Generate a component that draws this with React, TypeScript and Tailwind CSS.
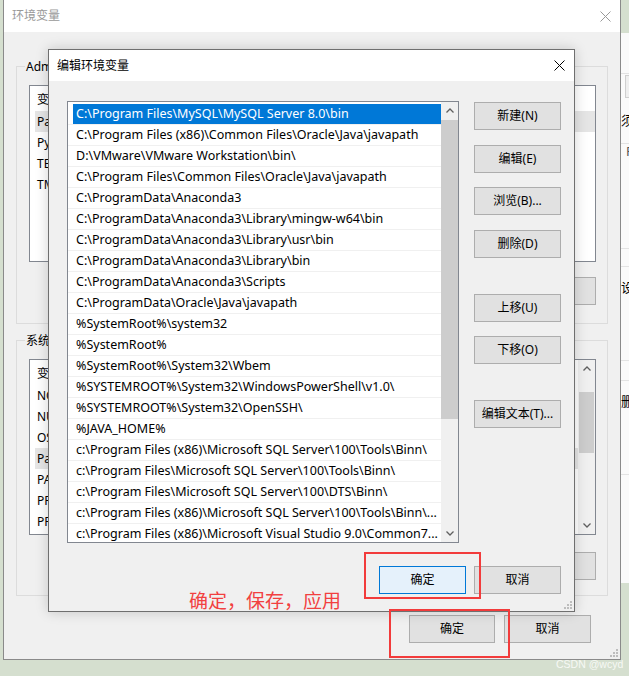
import clsx from "clsx";

const paths = [
  "C:\\Program Files\\MySQL\\MySQL Server 8.0\\bin",
  "C:\\Program Files (x86)\\Common Files\\Oracle\\Java\\javapath",
  "D:\\VMware\\VMware Workstation\\bin\\",
  "C:\\Program Files\\Common Files\\Oracle\\Java\\javapath",
  "C:\\ProgramData\\Anaconda3",
  "C:\\ProgramData\\Anaconda3\\Library\\mingw-w64\\bin",
  "C:\\ProgramData\\Anaconda3\\Library\\usr\\bin",
  "C:\\ProgramData\\Anaconda3\\Library\\bin",
  "C:\\ProgramData\\Anaconda3\\Scripts",
  "C:\\ProgramData\\Oracle\\Java\\javapath",
  "%SystemRoot%\\system32",
  "%SystemRoot%",
  "%SystemRoot%\\System32\\Wbem",
  "%SYSTEMROOT%\\System32\\WindowsPowerShell\\v1.0\\",
  "%SYSTEMROOT%\\System32\\OpenSSH\\",
  "%JAVA_HOME%",
  "c:\\Program Files (x86)\\Microsoft SQL Server\\100\\Tools\\Binn\\",
  "c:\\Program Files\\Microsoft SQL Server\\100\\Tools\\Binn\\",
  "c:\\Program Files\\Microsoft SQL Server\\100\\DTS\\Binn\\",
  "c:\\Program Files (x86)\\Microsoft SQL Server\\100\\Tools\\Binn\\...",
  "c:\\Program Files (x86)\\Microsoft Visual Studio 9.0\\Common7..."
];

const userVars = ["Path", "PyCharm Community Edition", "TEMP", "TMP"];
const sysVars = [
  "NODE_PATH",
  "NUMBER_OF_PROCESSORS",
  "OS",
  "Path",
  "PATHEXT",
  "PROCESSOR_ARCHITECTURE",
  "PROCESSOR_IDENTIFIER"
];

function CloseIcon({ color }: { color: string }) {
  return (
    <svg width="11" height="11" viewBox="0 0 11 11">
      <path d="M0.5 0.5L10.5 10.5M10.5 0.5L0.5 10.5" stroke={color} strokeWidth="1" />
    </svg>
  );
}

function Chevron({ up }: { up?: boolean }) {
  return (
    <svg width="8" height="5" viewBox="0 0 8 5">
      <path
        d={up ? "M0.5 4.5L4 1L7.5 4.5" : "M0.5 0.5L4 4L7.5 0.5"}
        stroke="#606060"
        strokeWidth="1.3"
        fill="none"
      />
    </svg>
  );
}

function Grip() {
  return (
    <svg width="10" height="10" viewBox="0 0 10 10">
      <rect x="8" y="2" width="2" height="2" fill="#bdbdbd" />
      <rect x="5" y="5" width="2" height="2" fill="#bdbdbd" />
      <rect x="8" y="5" width="2" height="2" fill="#bdbdbd" />
      <rect x="2" y="8" width="2" height="2" fill="#bdbdbd" />
      <rect x="5" y="8" width="2" height="2" fill="#bdbdbd" />
      <rect x="8" y="8" width="2" height="2" fill="#bdbdbd" />
    </svg>
  );
}

function Scrollbar({ gap, thumb }: { gap: number; thumb: number }) {
  return (
    <div className="flex w-[17px] flex-col bg-[#f0f0f0]">
      <div className="flex h-[17px] items-center justify-center">
        <Chevron up />
      </div>
      <div className="mx-[1px] bg-[#cdcdcd]" style={{ marginTop: gap, height: thumb }} />
      <div className="flex-1" />
      <div className="flex h-[17px] items-center justify-center">
        <Chevron />
      </div>
    </div>
  );
}

function WinButton({ label, focused, className }: { label: string; focused?: boolean; className?: string }) {
  return (
    <div
      className={clsx(
        "flex h-[28px] items-center justify-center border text-[12px] text-black",
        focused ? "border-[#0078d7] bg-[#e5f1fb]" : "border-[#adadad] bg-[#e1e1e1]",
        className
      )}
    >
      {label}
    </div>
  );
}

function VarList({ rows, height, scroll }: { rows: string[]; height: number; scroll?: boolean }) {
  return (
    <div className="ml-[12px] mr-[11px] flex border border-[#828790] bg-white" style={{ height }}>
      <div className="flex-1 overflow-hidden pt-[3px]">
        <div className="flex h-[22px] items-center pl-[7px]">变量</div>
        {rows.map((row) => (
          <div key={row} className="flex h-[21px]">
            <div
              className={clsx(
                "ml-[5px] flex flex-1 items-center whitespace-nowrap pl-[2px]",
                row === "Path" && "bg-[#e5e5e5]"
              )}
            >
              {row}
            </div>
          </div>
        ))}
      </div>
      {scroll ? <Scrollbar gap={15} thumb={61} /> : null}
    </div>
  );
}

function GroupBox({
  label,
  height,
  listHeight,
  buttonGap,
  buttons,
  rows,
  scroll
}: {
  label: string;
  height: number;
  listHeight: number;
  buttonGap: number;
  buttons: string[];
  rows: string[];
  scroll?: boolean;
}) {
  return (
    <div className="flex flex-col border border-[#dcdcdc]" style={{ height }}>
      <div className="-mt-[9px] ml-[8px] w-fit bg-[#f0f0f0] px-[1px] leading-[17px]">{label}</div>
      <div className="mt-[10px]">
        <VarList rows={rows} height={listHeight} scroll={scroll} />
      </div>
      <div className="mr-[11px] flex justify-end gap-[10px]" style={{ marginTop: buttonGap }}>
        {buttons.map((b) => (
          <WinButton key={b} label={b} className="w-[86px]" />
        ))}
      </div>
    </div>
  );
}

export default function App() {
  return (
    <div className="relative h-[676px] w-[629px] overflow-hidden bg-[#d5dfcf] font-['Noto_Sans','Noto_Sans_CJK_SC',sans-serif] text-[12px] text-black">
      {/* window behind, on the right */}
      <div className="absolute left-[620px] top-[33px] flex h-[550px] w-[30px] flex-col bg-[#fafafa] leading-none">
        <div className="mt-[40px] h-px bg-[#e3e3e3]" />
        <div className="ml-[5px] mt-[1px] h-[23px] border border-[#cfcfcf] bg-[#efefef]" />
        <div className="mt-[16px] whitespace-nowrap pl-[1px] text-[13px]">须</div>
        <div className="mt-[16px] h-px bg-[#e3e3e3]" />
        <div className="mt-[1px] pl-[6px] text-[13px] text-[#555]">F</div>
        <div className="mt-[90px] h-px bg-[#e3e3e3]" />
        <div className="mt-[17px] h-px bg-[#e3e3e3]" />
        <div className="mt-[14px] pl-[1px] text-[13px]">设</div>
        <div className="mt-[66px] h-px bg-[#e3e3e3]" />
        <div className="mt-[19px] h-px bg-[#e3e3e3]" />
        <div className="mt-[14px] pl-[1px] text-[13px]">删</div>
        <div className="mt-[66px] h-px bg-[#e3e3e3]" />
      </div>

      {/* 环境变量 window */}
      <div className="absolute left-[3px] top-0 flex h-[660px] w-[618px] flex-col border-x border-b border-[#8a8a8a] bg-[#f0f0f0]">
        <div className="flex h-[32px] items-center justify-between bg-white pl-[8px] pr-[9px]">
          <span className="text-[#999999]">环境变量</span>
          <CloseIcon color="#999999" />
        </div>
        <div className="flex flex-1 flex-col px-[12px]">
          <div className="mt-[34px]">
            <GroupBox
              label="Administrator 的用户变量"
              height={258}
              listHeight={177}
              buttonGap={15}
              buttons={["新建(N)...", "编辑(E)...", "删除(D)"]}
              rows={userVars}
            />
          </div>
          <div className="mt-[16px]">
            <GroupBox
              label="系统变量"
              height={256}
              listHeight={176}
              buttonGap={17}
              buttons={["新建(W)...", "编辑(I)...", "删除(L)"]}
              rows={sysVars}
              scroll
            />
          </div>
          <div className="mr-[17px] mt-[19px] flex justify-end gap-[9px]">
            <WinButton label="确定" className="w-[86px]" />
            <WinButton label="取消" className="w-[87px]" />
          </div>
        </div>
        <div className="absolute bottom-[2px] right-[2px]">
          <Grip />
        </div>
      </div>

      {/* 编辑环境变量 dialog */}
      <div className="absolute left-[48px] top-[49px] flex h-[563px] w-[527px] flex-col border border-[#6f6f6f] bg-[#f0f0f0] shadow-[0_0_12px_rgba(0,0,0,0.18)]">
        <div className="flex h-[31px] items-center justify-between bg-white pl-[8px] pr-[9px]">
          <span>编辑环境变量</span>
          <CloseIcon color="#000000" />
        </div>
        <div className="flex flex-1 flex-col pl-[18px] pr-[13px] pt-[20px]">
          <div className="flex">
            <div className="flex h-[442px] w-[392px] border border-[#828790] bg-white">
              <div className="flex-1 overflow-hidden pt-[2px] text-[12.5px]">
                {paths.map((p, i) => (
                  <div key={p} className="flex h-[21px] border-b border-[#f0f0f0]">
                    <div
                      className={clsx(
                        "ml-[5px] flex flex-1 items-center overflow-hidden whitespace-nowrap pl-[3px]",
                        i === 0 ? "bg-[#0078d7] text-white" : "text-black"
                      )}
                    >
                      {p}
                    </div>
                  </div>
                ))}
              </div>
              <div className="flex w-[17px] flex-col bg-[#f0f0f0]">
                <div className="flex h-[17px] items-center justify-center">
                  <Chevron up />
                </div>
                <div className="mt-[1px] h-[299px] bg-[#cdcdcd]" />
                <div className="flex-1" />
                <div className="flex h-[17px] items-center justify-center">
                  <Chevron />
                </div>
              </div>
            </div>
            <div className="ml-[15px] mt-[1px] flex w-[87px] flex-col">
              <WinButton label="新建(N)" />
              <WinButton label="编辑(E)" className="mt-[15px]" />
              <WinButton label="浏览(B)..." className="mt-[14px]" />
              <WinButton label="删除(D)" className="mt-[15px]" />
              <WinButton label="上移(U)" className="mt-[36px]" />
              <WinButton label="下移(O)" className="mt-[14px]" />
              <WinButton label="编辑文本(T)..." className="mt-[36px]" />
            </div>
          </div>
          <div className="mt-[23px] flex justify-end gap-[8px]">
            <WinButton label="确定" focused className="w-[87px]" />
            <WinButton label="取消" className="w-[87px]" />
          </div>
        </div>
        <div className="absolute bottom-[2px] right-[2px]">
          <Grip />
        </div>
      </div>

      {/* red annotations */}
      <div className="absolute left-[364px] top-[552px] h-[47px] w-[117px] border-2 border-[#f23b3b]" />
      <div className="absolute left-[389px] top-[609px] h-[49px] w-[121px] border-2 border-[#f23b3b]" />
      <div className="absolute left-[189px] top-[587px] whitespace-nowrap font-['Noto_Sans_CJK_SC',sans-serif] text-[19px] leading-[26px] text-[#f24040]">
        确定，保存，应用
      </div>

      <div className="absolute left-[556px] top-[657px] whitespace-nowrap font-['Liberation_Sans',sans-serif] text-[10.5px] text-[#f7f9f5]">
        CSDN @wcyd
      </div>
    </div>
  );
}
